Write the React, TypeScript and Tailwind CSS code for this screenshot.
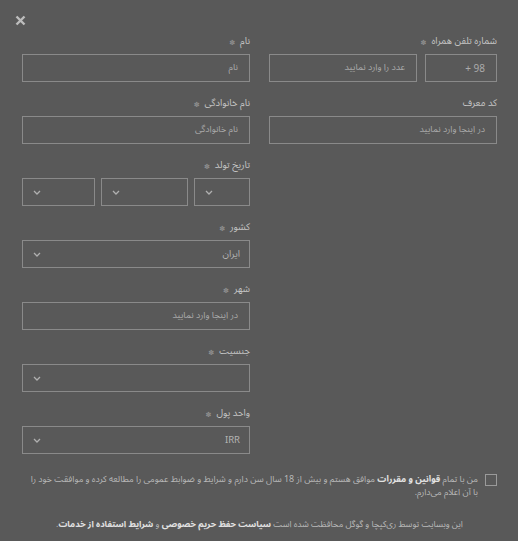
import React from "react";

const Chevron = () => (
  <svg width="8" height="5" viewBox="0 0 8 5" fill="none" className="shrink-0">
    <path d="M1 1l3 3 3-3" stroke="#b0b0b0" strokeWidth="1.3" />
  </svg>
);

const Label = ({ text, req = true }: { text: string; req?: boolean }) => (
  <div className="h-4 flex items-center gap-[5px] text-[9.5px] text-[#c4c4c4] mb-1 leading-none">
    <span>{text}</span>
    {req && <span className="text-[7px] text-[#8f8f8f]">✽</span>}
  </div>
);

const Input = ({ ph, className = "" }: { ph: string; className?: string }) => (
  <div className={"h-[28px] border border-[#8a8a8a] flex items-center pr-[11px] text-[9px] text-[#ababab] " + className}>
    {ph}
  </div>
);

const Select = ({ value = "", className = "" }: { value?: string; className?: string }) => (
  <div className={"h-[28px] border border-[#8a8a8a] flex items-center justify-between pr-[9px] pl-[10px] text-[9.5px] text-[#b4b4b4] " + className}>
    <span>{value}</span>
    <Chevron />
  </div>
);

export default function App() {
  return (
    <div
      className="w-[518px] h-[541px] bg-[#595959] relative overflow-hidden"
      style={{ fontFamily: '"Noto Sans Arabic", "Noto Naskh Arabic", Vazirmatn, "Liberation Sans", "DejaVu Sans", sans-serif' }}
    >
      <div className="absolute left-[15px] top-[15px]">
        <svg width="11" height="11" viewBox="0 0 11 11">
          <path d="M1.5 1.5l8 8M9.5 1.5l-8 8" stroke="#bdbdbd" strokeWidth="2.4" />
        </svg>
      </div>
      <div dir="rtl" className="pt-[34px] pr-[21px] pl-[22px]">
        <div className="flex gap-[19px]">
          <div className="w-[228px] flex flex-col gap-[14px]">
            <div>
              <Label text="شماره تلفن همراه" />
              <div className="flex gap-[8px]">
                <Input ph="98 +" className="w-[72px] text-[10px]" />
                <Input ph="عدد را وارد نمایید" className="flex-1" />
              </div>
            </div>
            <div>
              <Label text="کد معرف" req={false} />
              <Input ph="در اینجا وارد نمایید" />
            </div>
          </div>
          <div className="w-[228px] flex flex-col gap-[14px]">
            <div>
              <Label text="نام" />
              <Input ph="نام" />
            </div>
            <div>
              <Label text="نام خانوادگی" />
              <Input ph="نام خانوادگی" />
            </div>
            <div>
              <Label text="تاریخ تولد" />
              <div className="flex gap-[6px]">
                <Select className="w-[56px]" />
                <Select className="w-[87px]" />
                <Select className="flex-1" />
              </div>
            </div>
            <div>
              <Label text="کشور" />
              <Select value="ایران" />
            </div>
            <div>
              <Label text="شهر" />
              <Input ph="در اینجا وارد نمایید" />
            </div>
            <div>
              <Label text="جنسیت" />
              <Select />
            </div>
            <div>
              <Label text="واحد پول" />
              <Select value="IRR" />
            </div>
          </div>
        </div>
        <div className="mt-[19px] flex gap-[7px] items-start">
          <div className="w-[12px] h-[12px] border border-[#9a9a9a] shrink-0 mt-[1px]" />
          <p className="text-[8.9px] leading-[13px] text-[#b8b8b8]">
            من با تمام <span className="font-bold text-[#e2e2e2]">قوانین و مقررات</span> موافق هستم و بیش از 18 سال سن دارم و شرایط و ضوابط عمومی را مطالعه کرده و موافقت خود را {"با\u00a0آن"} اعلام می‌دارم.
          </p>
        </div>
        <p className="mt-[19px] text-center text-[8.7px] text-[#b8b8b8] whitespace-nowrap">
          این وبسایت توسط ری‌کپچا و گوگل محافظت شده است <span className="font-bold text-[#e2e2e2]">سیاست حفظ حریم خصوصی</span> و <span className="font-bold text-[#e2e2e2]">شرایط استفاده از خدمات</span>.
        </p>
      </div>
    </div>
  );
}
